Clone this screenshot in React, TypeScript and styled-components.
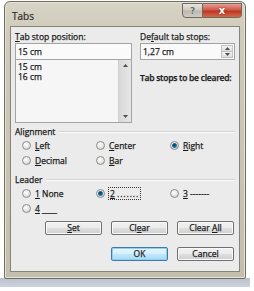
import styled, { createGlobalStyle } from "styled-components";

const GlobalStyle = createGlobalStyle`
  html, body {
    margin: 0;
    padding: 0;
    background: #ffffff;
  }
  body {
    font-family: "Open Sans", "DejaVu Sans", sans-serif;
    color: #1a1a1a;
  }
`;

const Page = styled.div`
  width: 254px;
  height: 291px;
  overflow: hidden;
  background: #ffffff;
  padding-top: 1px;
  box-sizing: border-box;
`;

const Window = styled.div`
  margin-left: 4px;
  width: 242px;
  height: 278px;
  box-sizing: border-box;
  border: 1px solid #6f6d64;
  border-radius: 6px 6px 2px 2px;
  background: linear-gradient(180deg, #d8d4c6 0%, #cfcab9 12%, #c4bfac 100%);
  box-shadow: inset 0 0 0 1px #e4e1d6;
  display: flex;
  flex-direction: column;
  position: relative;
  z-index: 1;
`;

const TitleBar = styled.div`
  height: 24px;
  display: flex;
  align-items: flex-start;
  justify-content: space-between;
  padding: 0 3px 0 7px;
`;

const Title = styled.span`
  font-size: 10px;
  line-height: 10px;
  margin-top: 9px;
  color: #2a2a2a;
  -webkit-text-stroke: 0.2px #2a2a2a;
`;

const Captions = styled.div`
  display: flex;
  margin-top: 1px;
`;

const CaptionButton = styled.div<{ $close?: boolean }>`
  width: ${(p) => (p.$close ? 39 : 21)}px;
  height: 15px;
  box-sizing: border-box;
  border: 1px solid #6e6a60;
  border-left-width: ${(p) => (p.$close ? 0 : 1)}px;
  border-radius: ${(p) => (p.$close ? "0 0 4px 0" : "0 0 0 4px")};
  background: ${(p) =>
    p.$close
      ? "linear-gradient(180deg, #e3a094 0%, #cf5a48 45%, #bd3623 55%, #d36a4e 100%)"
      : "linear-gradient(180deg, #e7e4dc 0%, #cfcbc1 45%, #bdb9ae 55%, #cfcbc2 100%)"};
  color: ${(p) => (p.$close ? "#ffffff" : "#6a6a6a")};
  font-family: "DejaVu Sans", sans-serif;
  font-weight: bold;
  font-size: ${(p) => (p.$close ? 10 : 9)}px;
  display: flex;
  align-items: center;
  justify-content: center;
  text-shadow: ${(p) => (p.$close ? "0 0 2px #7a1d10" : "0 0 1px #ffffff")};
`;

const Client = styled.div`
  flex: 1;
  margin: 0 5px 6px 5px;
  border: 1px solid #85837a;
  background: #ebebeb;
  padding: 3px 4px 0 4px;
  font-size: 8.5px;
  -webkit-text-stroke: 0.25px #1a1a1a;
  display: flex;
  flex-direction: column;
`;

const TopGrid = styled.div`
  display: grid;
  grid-template-columns: 117px 95px;
  column-gap: 8px;
`;

const Column = styled.div`
  display: flex;
  flex-direction: column;
`;

const FieldLabel = styled.div<{ $gap?: number; $strong?: boolean }>`
  line-height: 13px;
  height: 13px;
  margin-top: ${(p) => p.$gap ?? 0}px;
  white-space: nowrap;
  font-weight: ${(p) => (p.$strong ? 600 : 400)};
  letter-spacing: ${(p) => (p.$strong ? "-0.25px" : "0")};
`;

const Key = styled.span`
  text-decoration: underline;
  text-decoration-thickness: 1px;
  text-underline-offset: 1px;
`;

const TextBox = styled.div`
  height: 17px;
  box-sizing: border-box;
  border: 1px solid #a3a3a3;
  background: #fafafa;
  padding-left: 2px;
  display: flex;
  align-items: center;
  position: relative;
`;

const SpinArrows = styled.div`
  position: absolute;
  right: 1px;
  top: 1px;
  bottom: 1px;
  width: 12px;
  display: flex;
  flex-direction: column;
`;

const SpinHalf = styled.div`
  flex: 1;
  background: linear-gradient(180deg, #f3f3f3, #dedede);
  border: 1px solid #c2c2c2;
  display: flex;
  align-items: center;
  justify-content: center;
  & + & {
    border-top: 0;
  }
`;

const ListBox = styled.div`
  height: 64px;
  margin-top: -1px;
  box-sizing: border-box;
  border: 1px solid #a3a3a3;
  background: #f6f6f6;
  display: flex;
`;

const ListItems = styled.div`
  flex: 1;
  padding: 2px 0 0 2px;
  line-height: 10px;
`;

const ScrollBar = styled.div`
  width: 12px;
  background: linear-gradient(90deg, #d9d9d9, #e6e6e6);
  border-left: 1px solid #cfcfcf;
  display: flex;
  flex-direction: column;
  justify-content: space-between;
  align-items: center;
  padding: 4px 0 4px;
`;

const GroupTitle = styled.div<{ $gap: number }>`
  margin-top: ${(p) => p.$gap}px;
  height: 13px;
  line-height: 13px;
  display: flex;
  align-items: center;
  gap: 4px;
  &::after {
    content: "";
    flex: 1;
    height: 1px;
    background: #d4d4d4;
    box-shadow: 0 1px 0 #fbfbfb;
  }
`;

const RadioGrid = styled.div`
  display: grid;
  grid-template-columns: 74px 74px 1fr;
  grid-auto-rows: 15px;
  padding-left: 7px;
`;

const RadioItem = styled.div`
  display: flex;
  align-items: center;
  gap: 4px;
  white-space: nowrap;
`;

const RadioDot = styled.span<{ $on?: boolean }>`
  width: 9px;
  height: 9px;
  box-sizing: border-box;
  border-radius: 50%;
  border: 1px solid #8c8c8c;
  background: radial-gradient(circle at 40% 35%, #ffffff 0%, #e2e2e2 60%, #c9c9c9 100%);
  display: flex;
  align-items: center;
  justify-content: center;
  &::after {
    content: "";
    display: ${(p) => (p.$on ? "block" : "none")};
    width: 5px;
    height: 5px;
    border-radius: 50%;
    background: radial-gradient(circle at 45% 40%, #0d3a5c 0%, #1f6ea3 55%, #5aa9d9 100%);
  }
`;

const Focus = styled.span`
  outline: 1px dotted #333;
  outline-offset: 0px;
  padding: 0 1px;
`;

const Dots = styled.span`
  letter-spacing: 0.9px;
`;

const ButtonRow = styled.div<{ $gap: number }>`
  margin-top: ${(p) => p.$gap}px;
  display: flex;
  justify-content: flex-end;
  gap: 9px;
  padding-right: 1px;
`;

const Button = styled.div<{ $default?: boolean }>`
  width: 57px;
  height: 14px;
  box-sizing: border-box;
  border: 1px solid ${(p) => (p.$default ? "#3d7bad" : "#707070")};
  border-radius: 2px;
  background: ${(p) =>
    p.$default
      ? "linear-gradient(180deg, #eaf6fd 0%, #d9f0fc 45%, #bee6fd 55%, #a7d9f5 100%)"
      : "linear-gradient(180deg, #f2f2f2 0%, #ebebeb 45%, #dddddd 55%, #cfcfcf 100%)"};
  box-shadow: inset 0 0 0 1px ${(p) => (p.$default ? "#8fd0f0" : "#fafafa")};
  display: flex;
  align-items: center;
  justify-content: center;
  line-height: 12px;
  white-space: pre;
`;

const Backdrop = styled.div`
  margin-top: -1px;
  height: 9px;
  width: 250px;
  background: linear-gradient(180deg, #b9c1cd, #cdd3dc);
`;

const Arrow = ({ up }: { up?: boolean }) => (
  <svg width="5" height="3" viewBox="0 0 5 3">
    <path d={up ? "M0 3 L2.5 0 L5 3 Z" : "M0 0 L5 0 L2.5 3 Z"} fill="#4d4d4d" />
  </svg>
);

const Radio = ({
  on,
  children,
}: {
  on?: boolean;
  children: React.ReactNode;
}) => (
  <RadioItem>
    <RadioDot $on={on} />
    <span>{children}</span>
  </RadioItem>
);

export default function App() {
  return (
    <>
      <GlobalStyle />
      <Page>
        <Window>
          <TitleBar>
            <Title>Tabs</Title>
            <Captions>
              <CaptionButton>?</CaptionButton>
              <CaptionButton $close>x</CaptionButton>
            </Captions>
          </TitleBar>
          <Client>
            <TopGrid>
              <Column>
                <FieldLabel>
                  <Key>T</Key>ab stop position:
                </FieldLabel>
                <TextBox>15 cm</TextBox>
                <ListBox>
                  <ListItems>
                    <div>15 cm</div>
                    <div>16 cm</div>
                  </ListItems>
                  <ScrollBar>
                    <Arrow up />
                    <Arrow />
                  </ScrollBar>
                </ListBox>
              </Column>
              <Column>
                <FieldLabel>
                  De<Key>f</Key>ault tab stops:
                </FieldLabel>
                <TextBox>
                  1,27 cm
                  <SpinArrows>
                    <SpinHalf>
                      <Arrow up />
                    </SpinHalf>
                    <SpinHalf>
                      <Arrow />
                    </SpinHalf>
                  </SpinArrows>
                </TextBox>
                <FieldLabel $gap={11} $strong>
                  Tab stops to be cleared:
                </FieldLabel>
              </Column>
            </TopGrid>

            <GroupTitle $gap={2}>Alignment</GroupTitle>
            <RadioGrid>
              <Radio>
                <Key>L</Key>eft
              </Radio>
              <Radio>
                <Key>C</Key>enter
              </Radio>
              <Radio on>
                <Key>R</Key>ight
              </Radio>
              <Radio>
                <Key>D</Key>ecimal
              </Radio>
              <Radio>
                <Key>B</Key>ar
              </Radio>
            </RadioGrid>

            <GroupTitle $gap={5}>Leader</GroupTitle>
            <RadioGrid>
              <Radio>
                <Key>1</Key> None
              </Radio>
              <Radio on>
                <Focus>
                  <Key>2</Key> <Dots>.......</Dots>
                </Focus>
              </Radio>
              <Radio>
                <Key>3</Key> -------
              </Radio>
              <Radio>
                <Key>4</Key> ____
              </Radio>
            </RadioGrid>

            <ButtonRow $gap={5}>
              <Button>
                <span>
                  <Key>S</Key>et
                </span>
              </Button>
              <Button>
                <span>
                  Cl<Key>e</Key>ar
                </span>
              </Button>
              <Button>
                <span>
                  Clear <Key>A</Key>ll
                </span>
              </Button>
            </ButtonRow>
            <ButtonRow $gap={12}>
              <Button $default>OK</Button>
              <Button>Cancel</Button>
            </ButtonRow>
          </Client>
        </Window>
        <Backdrop />
      </Page>
    </>
  );
}
